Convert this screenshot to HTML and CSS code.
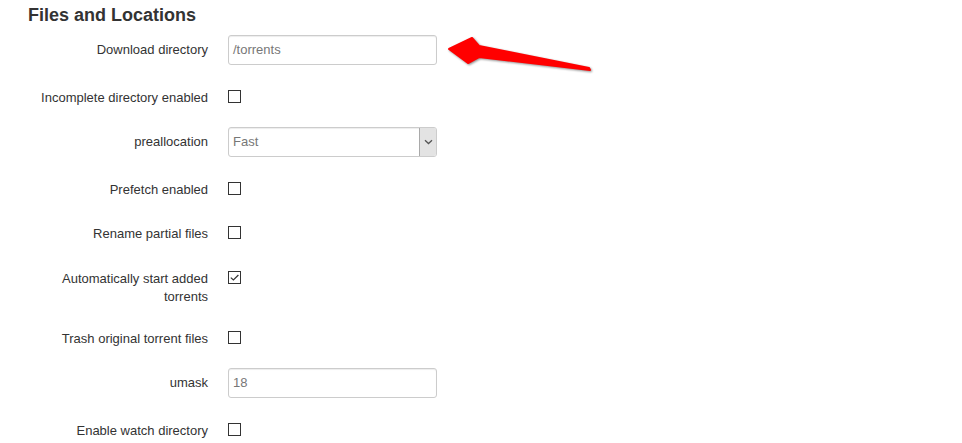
FILE: index.html
```html
<!DOCTYPE html>
<html>
<head>
<meta charset="utf-8">
<link rel="stylesheet" href="styles.css">
</head>
<body>
<div class="page">
  <h3 class="title">Files and Locations</h3>
  <div class="form">
    <div class="row input-row">
      <label class="lbl">Download directory</label>
      <div class="text-input">/torrents</div>
    </div>
    <div class="row check-row">
      <label class="lbl">Incomplete directory enabled</label>
      <span class="cb"></span>
    </div>
    <div class="row input-row">
      <label class="lbl">preallocation</label>
      <div class="select"><span class="select-val">Fast</span><span class="select-btn"><svg width="9" height="6" viewBox="0 0 9 6"><path d="M1 1.2 L4.5 4.5 L8 1.2" fill="none" stroke="#555" stroke-width="1.3"/></svg></span></div>
    </div>
    <div class="row check-row">
      <label class="lbl">Prefetch enabled</label>
      <span class="cb"></span>
    </div>
    <div class="row check-row">
      <label class="lbl">Rename partial files</label>
      <span class="cb"></span>
    </div>
    <div class="row check-row tall">
      <label class="lbl">Automatically start added torrents</label>
      <span class="cb"><svg width="11" height="11" viewBox="0 0 11 11"><path d="M1.8 5.6 L4.4 8 L9.4 3" fill="none" stroke="#333" stroke-width="1.2"/></svg></span>
    </div>
    <div class="row check-row">
      <label class="lbl">Trash original torrent files</label>
      <span class="cb"></span>
    </div>
    <div class="row input-row">
      <label class="lbl">umask</label>
      <div class="text-input">18</div>
    </div>
    <div class="row check-row">
      <label class="lbl">Enable watch directory</label>
      <span class="cb"></span>
    </div>
  </div>
  <svg class="arrow" width="962" height="100" viewBox="0 0 962 100">
    <polygon points="449,49 472,38 479,46 589,68 590,70 479,57 468,63" fill="#f00" stroke="#f00" stroke-width="2" stroke-linejoin="round"/>
  </svg>
</div>
</body>
</html>
```
FILE: styles.css
```css
html, body {
  margin: 0;
  padding: 0;
  background: #fff;
}
.page {
  position: relative;
  font-family: "Liberation Sans", Arial, sans-serif;
  color: #333;
  width: 962px;
  height: 443px;
  overflow: hidden;
}
.title {
  margin: 0 0 9px 28px;
  padding-top: 5px;
  font-size: 18px;
  line-height: 20px;
  font-weight: bold;
  color: #333;
}
.form {
  display: flex;
  flex-direction: column;
  padding-top: 1px;
}
.row {
  display: grid;
  grid-template-columns: 180px 209px;
  column-gap: 20px;
  margin-left: 28px;
  margin-bottom: 18px;
  align-items: start;
}
.check-row {
  min-height: 26px;
}
.check-row.tall {
  padding-top: 1px;
}
.lbl {
  text-align: right;
  font-size: 13px;
  line-height: 18px;
  color: #333;
}
.input-row .lbl {
  padding-top: 6px;
}
.check-row .lbl {
  padding-top: 6px;
}
.text-input, .select {
  box-sizing: border-box;
  height: 30px;
  border: 1px solid #ccc;
  border-radius: 3px;
  box-shadow: inset 0 1px 1px rgba(0,0,0,.075);
  font-size: 13px;
  line-height: 28px;
  color: #777;
  padding: 0 4px;
  background: #fff;
}
.select {
  display: flex;
  padding: 0 0 0 4px;
  overflow: hidden;
}
.select-val {
  flex: 1;
}
.select-btn {
  width: 16px;
  border-left: 1px solid #a9a9a9;
  background: #e3e3e3;
  display: flex;
  align-items: center;
  justify-content: center;
}
.cb {
  box-sizing: border-box;
  width: 13px;
  height: 13px;
  margin-top: 7px;
  border: 1px solid #333;
  background: #fff;
  display: flex;
  align-items: center;
  justify-content: center;
}
.cb svg {
  display: block;
}
.arrow {
  position: absolute;
  left: 0;
  top: 0;
  filter: drop-shadow(1px 1px 1px rgba(0,0,0,.45));
}
```
